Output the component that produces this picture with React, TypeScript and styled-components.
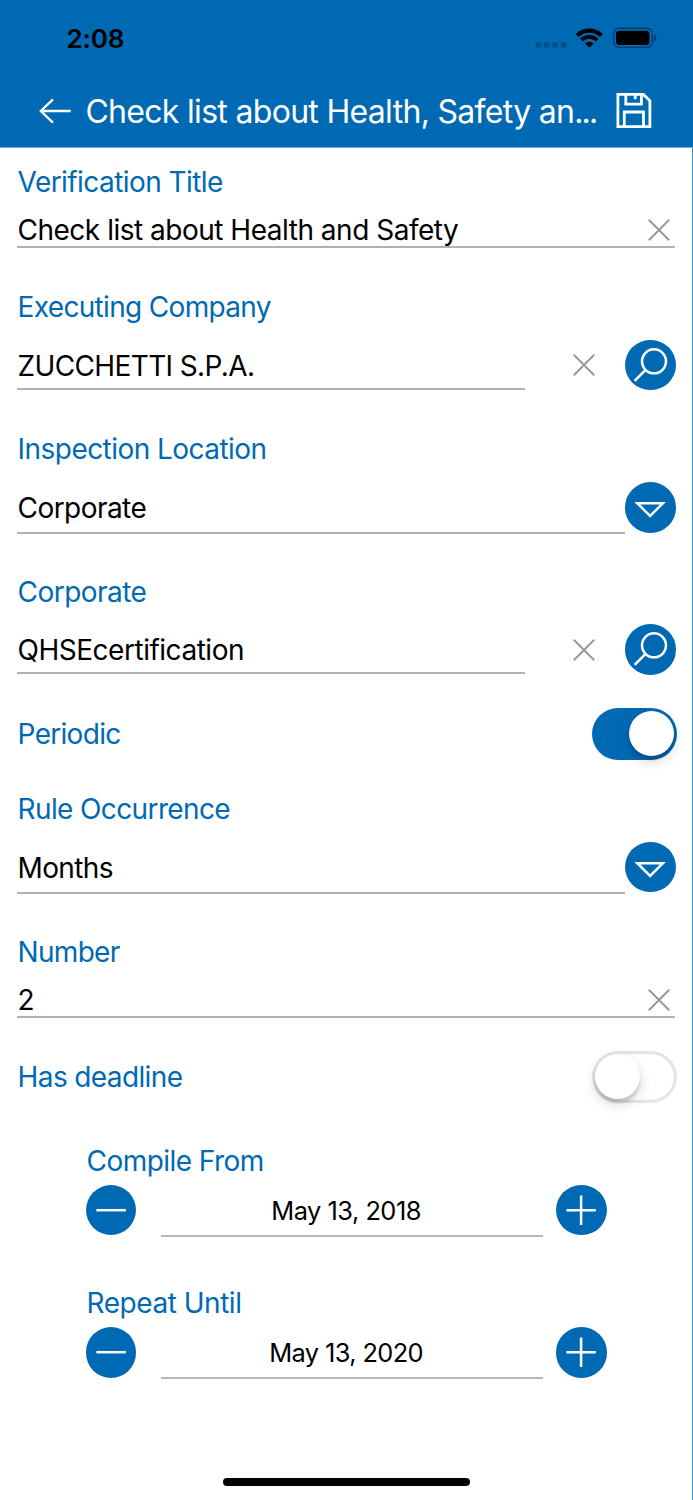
import React from "react";
import styled, { createGlobalStyle } from "styled-components";

const BLUE = "#0069b4";

const Global = createGlobalStyle`
  *, *::before, *::after { box-sizing: border-box; }
  body { margin: 0; background: #fff; font-family: Inter, "Liberation Sans", sans-serif; }
  button { border: 0; padding: 0; background: none; font: inherit; color: inherit; }
  svg { display: block; flex: none; }
`;

const Screen = styled.div`
  width: 693px;
  height: 1500px;
  display: flex;
  flex-direction: column;
  overflow: hidden;
  background: #fff;
`;

const Header = styled.header`
  height: 148px;
  flex: none;
  background: ${BLUE};
  border-bottom: 1px solid #6fa9d6;
`;

const StatusBar = styled.div`
  height: 74px;
  padding: 0 36px 0 66.5px;
  display: flex;
  align-items: center;
  justify-content: space-between;
`;

const Clock = styled.span`
  margin-top: 3px;
  font-size: 26px;
  font-weight: 600;
  line-height: 32px;
  letter-spacing: -0.1px;
  color: #000;
`;

const NavBar = styled.div`
  height: 74px;
  padding: 0 41px 0 38px;
  display: flex;
  align-items: center;
`;

const NavTitle = styled.h1`
  margin: 2px 0 0 13.4px;
  flex: 1;
  min-width: 0;
  font-size: 32px;
  font-weight: 400;
  line-height: 40px;
  letter-spacing: -0.69px;
  white-space: nowrap;
  color: #fff;
`;

const Dots = styled.span`
  letter-spacing: -1.9px;
`;

const Form = styled.main`
  flex: 1;
  padding: 17px 16px 0 17px;
  border-right: 1px solid #3a8bc8;
  display: flex;
  flex-direction: column;
`;

const Field = styled.section<{ $height: number }>`
  height: ${(p) => p.$height}px;
  flex: none;
`;

const Label = styled.div<{ $track?: number }>`
  padding-left: 0.6px;
  font-size: 28px;
  line-height: 34px;
  letter-spacing: ${(p) => p.$track ?? 0}px;
  white-space: nowrap;
  color: ${BLUE};
`;

const Row = styled.div<{ $gap: number }>`
  margin-top: ${(p) => p.$gap}px;
  display: flex;
  align-items: flex-start;
`;

const Value = styled.div<{ $track?: number; $width: number; $height: number; $pad?: number }>`
  width: ${(p) => p.$width}px;
  flex: none;
  height: ${(p) => p.$height}px;
  padding: ${(p) => p.$pad ?? 0}px 0 0 0.5px;
  border-bottom: 2px solid #b0b0b0;
  display: flex;
  justify-content: space-between;
  font-size: 28px;
  line-height: 34px;
  letter-spacing: ${(p) => p.$track ?? 0}px;
  white-space: nowrap;
  color: #000;
`;

const ClearButton = styled.button<{ $right: number; $top: number }>`
  margin: ${(p) => p.$top}px ${(p) => p.$right}px 0 auto;
  width: 22px;
  height: 22px;
`;

const RoundButton = styled.button`
  width: 50.4px;
  height: 50.4px;
  flex: none;
  border-radius: 50%;
  background: ${BLUE};
`;

const ToggleRow = styled.section<{ $height: number }>`
  height: ${(p) => p.$height}px;
  flex: none;
  display: flex;
  justify-content: space-between;
  align-items: flex-start;
`;

const Track = styled.button<{ $on: boolean }>`
  width: 85px;
  height: 52px;
  margin: -9.3px -1px 0 0;
  border-radius: 26px;
  display: flex;
  align-items: center;
  padding: 0 3px;
  justify-content: ${(p) => (p.$on ? "flex-end" : "flex-start")};
  background: ${(p) => (p.$on ? BLUE : "#fff")};
  box-shadow: ${(p) => (p.$on ? "none" : "inset 0 0 0 3.2px #e5e5e5")};
`;

const Knob = styled.span`
  width: 45.4px;
  height: 45.4px;
  border-radius: 50%;
  background: #fff;
  box-shadow: 0 5px 13px rgba(0, 0, 0, 0.16), 0 4px 3px rgba(0, 0, 0, 0.13);
`;

const DateField = styled(Field)`
  padding-left: 69px;
`;

const DateValue = styled.div<{ $track: number }>`
  width: 382px;
  height: 52px;
  margin: 0 12.8px 0 25px;
  padding: 10px 12.6px 0 0;
  border-bottom: 2px solid #b8b8b8;
  text-align: center;
  font-size: 25.4px;
  line-height: 31px;
  letter-spacing: ${(p) => p.$track}px;
  color: #000;
`;

const HomeBar = styled.div`
  width: 247.4px;
  height: 8.6px;
  margin: auto auto 13.6px 205.5px;
  flex: none;
  border-radius: 5px;
  background: #000;
`;

function StatusIcons() {
  return (
    <svg width="122" height="24" viewBox="535 25 122 24">
      <g fill="#000" fillOpacity="0.22">
        <rect x="535.6" y="42" width="5.7" height="5.8" rx="1.8" />
        <rect x="543.9" y="42" width="5.7" height="5.8" rx="1.8" />
        <rect x="552.3" y="42" width="5.7" height="5.8" rx="1.8" />
        <rect x="560.6" y="42" width="5.7" height="5.8" rx="1.8" />
      </g>
      <g fill="none" stroke="#000">
        <path d="M577.2 35.6A17.3 17.3 0 0 1 601.4 35.6" strokeWidth="4.2" />
        <path d="M581.4 40.1A11.2 11.2 0 0 1 597.2 40.1" strokeWidth="3.9" />
      </g>
      <path d="M585 43.5A6 6 0 0 1 593.6 43.5L589.3 47.8Z" fill="#000" />
      <rect x="613.7" y="28.2" width="38.6" height="19.2" rx="5.6" fill="none" stroke="#000" strokeOpacity="0.42" strokeWidth="1.4" />
      <rect x="616" y="30.8" width="33.4" height="14.2" rx="3.4" fill="#000" />
      <path d="M654 34.4Q656.6 35.3 656.6 37.8T654 41.2Z" fill="#000" fillOpacity="0.45" />
    </svg>
  );
}

function BackIcon() {
  return (
    <svg width="34" height="26" viewBox="0 0 34 26" fill="none" stroke="#fff" strokeWidth="2.3">
      <path d="M2.5 13H32.7M15 1.3L2.8 13L15 24.7" />
    </svg>
  );
}

function SaveIcon() {
  return (
    <svg width="36" height="36" viewBox="0 0 36 36" fill="none" stroke="#fff" strokeWidth="2.8">
      <path d="M1.9 1.4H27.4L33.9 7.8V33.6H1.9Z" />
      <path d="M9.8 1.5V11.2H25.4V1.5M19.2 1.5V6.2M8.3 33.5V19H27.5V33.5" />
    </svg>
  );
}

function Clear({ right = 0, top = 0 }: { right?: number; top?: number }) {
  return (
    <ClearButton $right={right} $top={top} aria-label="Clear">
      <svg width="22" height="22" viewBox="0 0 22 22" stroke="#999" strokeWidth="2">
        <path d="M0.8 0.8L21.2 21.2M21.2 0.8L0.8 21.2" />
      </svg>
    </ClearButton>
  );
}

const glyphs = {
  search: (
    <>
      <circle cx="29" cy="21.3" r="12" />
      <path d="M20.6 29.8L9.6 41" />
    </>
  ),
  down: <path d="M12.3 21.2H37.9L25.1 34Z" />,
  minus: <path d="M10.4 25.2H39.8" />,
  plus: <path d="M10.4 25.2H39.8M25.1 10.6V40" />,
};

function Round({ icon }: { icon: keyof typeof glyphs }) {
  return (
    <RoundButton aria-label={icon}>
      <svg width="50.4" height="50.4" viewBox="0 0 50.4 50.4" fill="none" stroke="#fff" strokeWidth="2.5">
        {glyphs[icon]}
      </svg>
    </RoundButton>
  );
}

type Props = { label: string; value: string; height: number; lt?: number; vt?: number };

function TextField({ label, value, height, lt, vt }: Props) {
  return (
    <Field $height={height}>
      <Label $track={lt}>{label}</Label>
      <Row $gap={14}>
        <Value $width={658.3} $height={35} $track={vt}>
          {value}
          <Clear right={5.4} top={6} />
        </Value>
      </Row>
    </Field>
  );
}

function LookupField({ label, value, height, lt, vt }: Props) {
  return (
    <Field $height={height}>
      <Label $track={lt}>{label}</Label>
      <Row $gap={15.8}>
        <Value $width={508} $height={50} $pad={9} $track={vt}>{value}</Value>
        <Clear right={30.7} top={14.2} />
        <Round icon="search" />
        <RowEnd />
      </Row>
    </Field>
  );
}

const RowEnd = styled.span`
  width: 0.3px;
  flex: none;
`;

function SelectField({ label, value, height, lt, vt }: Props) {
  return (
    <Field $height={height}>
      <Label $track={lt}>{label}</Label>
      <Row $gap={16}>
        <Value $width={608.3} $height={52} $pad={9} $track={vt}>{value}</Value>
        <Round icon="down" />
      </Row>
    </Field>
  );
}

function StepperField({ label, value, height, lt, vt }: Props) {
  return (
    <DateField $height={height}>
      <Label $track={lt}>{label}</Label>
      <Row $gap={7}>
        <Round icon="minus" />
        <DateValue $track={vt ?? 0}>{value}</DateValue>
        <Round icon="plus" />
      </Row>
    </DateField>
  );
}

function Toggle({ label, on, height, lt }: { label: string; on: boolean; height: number; lt?: number }) {
  return (
    <ToggleRow $height={height}>
      <Label $track={lt}>{label}</Label>
      <Track $on={on} role="switch" aria-checked={on} aria-label={label}>
        <Knob />
      </Track>
    </ToggleRow>
  );
}

export default function App() {
  return (
    <Screen>
      <Global />
      <Header>
        <StatusBar>
          <Clock>2:08</Clock>
          <StatusIcons />
        </StatusBar>
        <NavBar>
          <BackIcon />
          <NavTitle>Check list about Health, Safety an<Dots>...</Dots></NavTitle>
          <SaveIcon />
        </NavBar>
      </Header>
      <Form>
        <TextField label="Verification Title" lt={-0.57} value="Check list about Health and Safety" vt={-0.49} height={125} />
        <LookupField label="Executing Company" lt={-0.67} value="ZUCCHETTI S.P.A." vt={-0.63} height={142.3} />
        <SelectField label="Inspection Location" lt={-0.55} value="Corporate" vt={-0.55} height={142.3} />
        <LookupField label="Corporate" lt={-0.55} value="QHSEcertification" vt={-0.48} height={142.5} />
        <Toggle label="Periodic" lt={-0.7} on height={75} />
        <SelectField label="Rule Occurrence" lt={-0.62} value="Months" vt={-0.62} height={142.6} />
        <TextField label="Number" lt={-0.7} value="2" height={125.4} />
        <Toggle label="Has deadline" lt={-0.62} on={false} height={84} />
        <StepperField label="Compile From" lt={-0.56} value="May 13, 2018" vt={-0.5} height={142.3} />
        <StepperField label="Repeat Until" lt={-0.47} value="May 13, 2020" vt={-0.62} height={142.3} />
        <HomeBar />
      </Form>
    </Screen>
  );
}
